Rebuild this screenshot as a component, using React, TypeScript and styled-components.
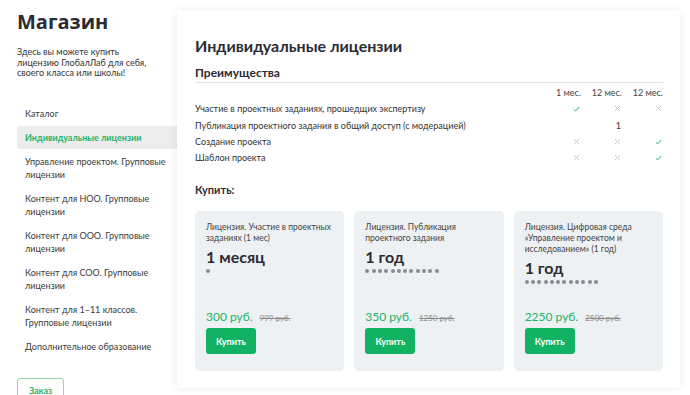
import React from "react";
import styled, { createGlobalStyle } from "styled-components";

const Global = createGlobalStyle`
  html, body { margin: 0; padding: 0; background: #ffffff; }
  body { font-family: Lato, "Open Sans", "Noto Sans", sans-serif; color: #333; }
  * { box-sizing: border-box; }
`;

const Page = styled.div`
  display: flex;
  width: 690px;
  height: 395px;
  overflow: hidden;
`;

const Sidebar = styled.aside`
  width: 177px;
  flex: none;
  padding: 9px 0 0 17px;
`;

const ShopTitle = styled.h1`
  margin: 0;
  font-family: "Open Sans", Lato, sans-serif;
  font-size: 20px;
  line-height: 26px;
  font-weight: 700;
  color: #2b2b33;
`;

const Intro = styled.p`
  margin: 12px 0 0;
  font-size: 9px;
  line-height: 10.5px;
  color: #333;
  width: 140px;
`;

const Menu = styled.nav`
  margin-top: 23px;
  display: flex;
  flex-direction: column;
  gap: 1px;
`;

const MenuItem = styled.div<{ $active?: boolean }>`
  padding: 5px 8px;
  font-size: 9px;
  line-height: 13px;
  color: ${(p) => (p.$active ? "#1fb36b" : "#3a3a3a")};
  font-weight: ${(p) => (p.$active ? 700 : 400)};
  background: ${(p) => (p.$active ? "#ececec" : "transparent")};
  border-radius: 3px 0 0 3px;
`;

const OrderButton = styled.button`
  margin-top: 20px;
  width: 47px;
  height: 26px;
  border: 1px solid #8fd9ad;
  border-radius: 3px;
  background: #fff;
  color: #1fb36b;
  font-family: inherit;
  font-weight: 700;
  font-size: 9px;
  padding: 0;
`;

const Main = styled.main`
  flex: 1;
  padding: 10px 10px 7px 0;
`;

const Card = styled.section`
  height: 378px;
  background: #fff;
  box-shadow: 0 0 10px rgba(0, 0, 0, 0.08);
  border-radius: 3px;
  padding: 26px 17px 0 18px;
`;

const Heading = styled.h2`
  margin: 0;
  font-family: Lato, "Open Sans", sans-serif;
  font-size: 16px;
  line-height: 20px;
  font-weight: 700;
  color: #2b2b33;
`;

const SubHeading = styled.h3`
  margin: 9px 0 0;
  padding-bottom: 1px;
  font-family: Lato, "Open Sans", sans-serif;
  font-size: 12px;
  line-height: 16px;
  font-weight: 700;
  color: #2b2b33;
  border-bottom: 1px solid #e4e4e4;
`;

const Table = styled.div`
  margin-top: 1.5px;
  display: grid;
  grid-template-columns: 1fr 41px 41px 41px;
  grid-auto-rows: 16.3px;
  align-items: center;
  font-size: 9px;
  color: #333;
`;

const HeadCell = styled.div`
  text-align: right;
  color: #444;
`;

const LabelCell = styled.div``;

const MarkCell = styled.div`
  padding-right: 1px;
  display: flex;
  justify-content: flex-end;
  align-items: center;
`;

const Check = () => (
  <svg width="7" height="6" viewBox="0 0 7 6">
    <path d="M0.8 3.2 L2.6 4.9 L6.3 1" stroke="#22b36a" strokeWidth="1" fill="none" />
  </svg>
);

const Cross = () => (
  <svg width="7" height="7" viewBox="0 0 7 7">
    <path d="M1 1 L6 6 M6 1 L1 6" stroke="#c9c9c9" strokeWidth="1" fill="none" />
  </svg>
);

const BuyTitle = styled.h4`
  margin: 17.5px 0 0;
  font-size: 11px;
  line-height: 14px;
  font-weight: 700;
  color: #2b2b33;
`;

const Offers = styled.div`
  margin-top: 14px;
  display: grid;
  grid-template-columns: repeat(3, 1fr);
  gap: 10px;
`;

const Offer = styled.div`
  height: 160px;
  background: #edf1f3;
  border-radius: 5px;
  padding: 11px 11px 17px;
  display: flex;
  flex-direction: column;
`;

const OfferName = styled.div`
  font-size: 8.5px;
  line-height: 11px;
  color: #444;
`;

const Term = styled.div`
  margin-top: 4px;
  font-family: Lato, "Open Sans", sans-serif;
  font-size: 16px;
  line-height: 18px;
  font-weight: 700;
  color: #2b2b33;
`;

const DotRow = styled.div`
  margin-top: 3px;
  display: flex;
  gap: 2.3px;
`;

const Dot = styled.span`
  width: 4px;
  height: 4px;
  border-radius: 50%;
  background: #8a8a96;
`;

const PriceRow = styled.div`
  margin-top: auto;
  display: flex;
  align-items: baseline;
  gap: 7px;
`;

const Price = styled.span`
  font-size: 12px;
  color: #22b36a;
`;

const OldPrice = styled.span`
  font-size: 8px;
  color: #8a8a8a;
  text-decoration: line-through;
`;

const BuyButton = styled.button`
  margin-top: 4px;
  width: 50px;
  height: 26px;
  border: none;
  border-radius: 3px;
  background: #12b263;
  color: #fff;
  font-family: inherit;
  font-weight: 700;
  font-size: 9px;
  padding: 0;
`;

const Dots = ({ count }: { count: number }) => (
  <DotRow>
    {Array.from({ length: count }).map((_, i) => (
      <Dot key={i} />
    ))}
  </DotRow>
);

type Mark = "check" | "cross" | "1" | "";

const rows: { label: string; marks: Mark[] }[] = [
  { label: "Участие в проектных заданиях, прошедщих экспертизу", marks: ["check", "cross", "cross"] },
  { label: "Публикация проектного задания в общий доступ (с модерацией)", marks: ["", "1", ""] },
  { label: "Создание проекта", marks: ["cross", "cross", "check"] },
  { label: "Шаблон проекта", marks: ["cross", "cross", "check"] },
];

const offers = [
  { name: "Лицензия. Участие в проектных заданиях (1 мес)", term: "1 месяц", dots: 1, price: "300 руб.", old: "999 руб." },
  { name: "Лицензия. Публикация проектного задания", term: "1 год", dots: 12, price: "350 руб.", old: "1250 руб." },
  { name: "Лицензия. Цифровая среда «Управление проектом и исследованием» (1 год)", term: "1 год", dots: 12, price: "2250 руб.", old: "2500 руб." },
];

const menu = [
  "Каталог",
  "Индивидуальные лицензии",
  "Управление проектом. Групповые лицензии",
  "Контент для НОО. Групповые лицензии",
  "Контент для ООО. Групповые лицензии",
  "Контент для СОО. Групповые лицензии",
  "Контент для 1–11 классов. Групповые лицензии",
  "Дополнительное образование",
];

const renderMark = (m: Mark) => {
  if (m === "check") return <Check />;
  if (m === "cross") return <Cross />;
  return m;
};

export default function App() {
  return (
    <>
      <Global />
      <Page>
        <Sidebar>
          <ShopTitle>Магазин</ShopTitle>
          <Intro>Здесь вы можете купить лицензию ГлобалЛаб для себя, своего класса или школы!</Intro>
          <Menu>
            {menu.map((m, i) => (
              <MenuItem key={m} $active={i === 1}>
                {m}
              </MenuItem>
            ))}
          </Menu>
          <OrderButton>Заказ</OrderButton>
        </Sidebar>
        <Main>
          <Card>
            <Heading>Индивидуальные лицензии</Heading>
            <SubHeading>Преимущества</SubHeading>
            <Table>
              <div />
              <HeadCell>1 мес.</HeadCell>
              <HeadCell>12 мес.</HeadCell>
              <HeadCell>12 мес.</HeadCell>
              {rows.map((r) => (
                <React.Fragment key={r.label}>
                  <LabelCell>{r.label}</LabelCell>
                  {r.marks.map((m, i) => (
                    <MarkCell key={i}>{renderMark(m)}</MarkCell>
                  ))}
                </React.Fragment>
              ))}
            </Table>
            <BuyTitle>Купить:</BuyTitle>
            <Offers>
              {offers.map((o) => (
                <Offer key={o.name}>
                  <OfferName>{o.name}</OfferName>
                  <Term>{o.term}</Term>
                  <Dots count={o.dots} />
                  <PriceRow>
                    <Price>{o.price}</Price>
                    <OldPrice>{o.old}</OldPrice>
                  </PriceRow>
                  <BuyButton>Купить</BuyButton>
                </Offer>
              ))}
            </Offers>
          </Card>
        </Main>
      </Page>
    </>
  );
}
